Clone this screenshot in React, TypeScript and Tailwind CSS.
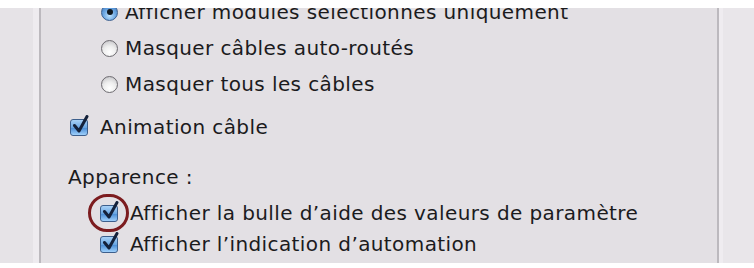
const FONT = "font-['DejaVu_Sans',_'Liberation_Sans',_sans-serif]";

function Radio({ checked }: { checked?: boolean }) {
  return (
    <span
      className={
        "relative flex h-[17px] w-[17px] shrink-0 items-center justify-center rounded-full border " +
        (checked
          ? "border-[#3a5f8f] bg-[radial-gradient(circle_at_50%_70%,#bfe3ff_0%,#6fa9e3_45%,#2e6db8_100%)]"
          : "border-[#6d6b70] bg-[radial-gradient(circle_at_50%_75%,#ffffff_0%,#eeeeee_45%,#bdbcc0_100%)]")
      }
    >
      {checked && <span className="h-[6px] w-[6px] rounded-full bg-[#101820]" />}
    </span>
  );
}

function Checkbox({ ring }: { ring?: boolean }) {
  return (
    <span className="relative flex h-[17px] w-[18px] shrink-0">
      <span className="absolute inset-0 rounded-[3px] border border-[#3d5f8c] bg-[linear-gradient(180deg,#a9d2f7_0%,#6aa6e2_50%,#4d8fd6_55%,#9fd0fb_100%)]" />
      <svg
        className="absolute left-[1px] top-[-4px]"
        width="20"
        height="20"
        viewBox="0 0 20 20"
        fill="none"
      >
        <path
          d="M3.5 10.5 L8 16 L16 1.5"
          stroke="#14213a"
          strokeWidth="3"
          strokeLinecap="round"
          strokeLinejoin="round"
        />
      </svg>
      {ring && (
        <span className="absolute left-[-12px] top-[-11px] h-[38px] w-[41px] rounded-full border-[3px] border-[#7c1c1f]" />
      )}
    </span>
  );
}

export default function App() {
  return (
    <div
      className={
        "flex h-[268px] w-[754px] flex-col bg-white whitespace-nowrap text-[20px] tracking-[0.4px] text-[#1b1b1d] " +
        FONT
      }
    >
      <div className="h-[8px] shrink-0 bg-white" />
      <div className="flex h-[255px] shrink-0">
        <div className="w-[33px] shrink-0 bg-[#e6e3e7]" />
        <div className="w-[6px] shrink-0 bg-[#eeebef]" />
        <div className="w-[2px] shrink-0 bg-[#bcb9be]" />
        <div className="flex w-[676px] shrink-0 flex-col overflow-hidden bg-[#e3e0e4]">
          <div className="mt-[-14px] flex h-[36px] shrink-0 items-center gap-[7px] pl-[60px]">
            <Radio checked />
            <span>Afficher modules sélectionnés uniquement</span>
          </div>
          <div className="flex h-[36px] shrink-0 items-center gap-[7px] pl-[60px]">
            <Radio />
            <span>Masquer câbles auto-routés</span>
          </div>
          <div className="flex h-[36px] shrink-0 items-center gap-[7px] pl-[60px]">
            <Radio />
            <span>Masquer tous les câbles</span>
          </div>
          <div className="mt-[7px] flex h-[36px] shrink-0 items-center gap-[12px] pl-[29px]">
            <Checkbox />
            <span>Animation câble</span>
          </div>
          <div className="mt-[14px] flex h-[36px] shrink-0 items-center pl-[27px]">
            <span>Apparence :</span>
          </div>
          <div className="flex h-[36px] shrink-0 items-center gap-[12px] pl-[59px]">
            <Checkbox ring />
            <span>Afficher la bulle d’aide des valeurs de paramètre</span>
          </div>
          <div className="mt-[-5px] flex h-[36px] shrink-0 items-center gap-[12px] pl-[59px]">
            <Checkbox />
            <span>Afficher l’indication d’automation</span>
          </div>
        </div>
        <div className="w-[2px] shrink-0 bg-[#bcb9be]" />
        <div className="w-[4px] shrink-0 bg-[#efecf0]" />
        <div className="flex-1 bg-[#e9e6ea]" />
      </div>
      <div className="flex-1 bg-white" />
    </div>
  );
}
